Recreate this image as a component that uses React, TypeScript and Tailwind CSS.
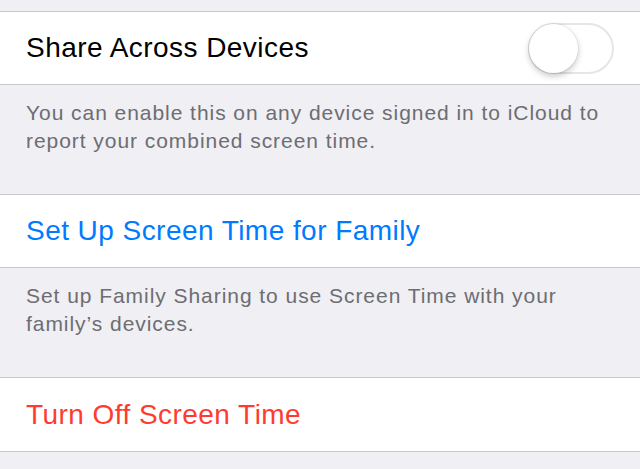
import React from "react";

const font = { fontFamily: '"Liberation Sans", Arial, sans-serif' };

function Toggle() {
  return (
    <div className="relative h-[51px] w-[86px] rounded-full border-2 border-[#e5e5ea] bg-white">
      <div className="absolute left-[-1px] top-[-1px] h-[49px] w-[49px] rounded-full bg-white shadow-[0_3px_6px_rgba(0,0,0,0.22),0_0_0_1px_rgba(0,0,0,0.05)]" />
    </div>
  );
}

function Footer({ lines }: { lines: string[] }) {
  return (
    <div className="px-[26px] pt-[14px] pb-[39px] text-[21px] leading-[28px] tracking-[0.95px] text-[#6d6d72]">
      {lines.map((l) => (
        <div key={l}>{l}</div>
      ))}
    </div>
  );
}

export default function App() {
  return (
    <div className="h-[469px] w-[640px] overflow-hidden bg-[#efeff4]" style={font}>
      <div className="h-[11px]" />
      <div className="flex h-[74px] items-center justify-between border-y border-[#c8c7cc] bg-white pl-[26px] pr-[26px]">
        <span className="text-[28px] tracking-[0.45px] text-black">Share Across Devices</span>
        <Toggle />
      </div>
      <Footer lines={["You can enable this on any device signed in to iCloud to", "report your combined screen time."]} />
      <div className="flex h-[74px] items-center border-y border-[#c8c7cc] bg-white pl-[26px]">
        <span className="text-[28px] tracking-[0.45px] text-[#007aff]">Set Up Screen Time for Family</span>
      </div>
      <Footer lines={["Set up Family Sharing to use Screen Time with your", "family’s devices."]} />
      <div className="flex h-[75px] items-center border-y border-[#c8c7cc] bg-white pl-[26px]">
        <span className="text-[28px] tracking-[0.45px] text-[#ff3b30]">Turn Off Screen Time</span>
      </div>
    </div>
  );
}
